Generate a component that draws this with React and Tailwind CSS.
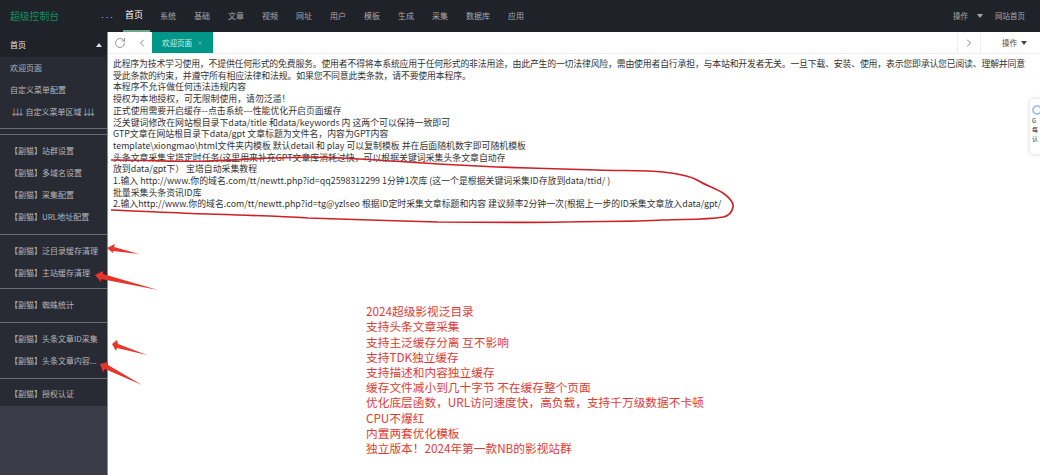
import React from 'react';
import { RotateCw, ChevronLeft, ChevronRight, X } from 'lucide-react';

const navItems = ['系统', '基础', '文章', '视频', '网址', '用户', '模板', '生成', '采集', '数据库', '应用'];

const menuGroups = [
  { cls: 'pt-[5px] pb-[6px]', items: ['【副猫】站群设置', '【副猫】多域名设置', '【副猫】采集配置', '【副猫】URL地址配置'] },
  { cls: 'pt-[5px] pb-[4px]', items: ['【副猫】泛目录缓存清理', '【副猫】主站缓存清理'] },
  { cls: 'pt-[5px] pb-[6px]', items: ['【副猫】蜘蛛统计'] },
  { cls: 'pt-[5px] pb-[6px]', items: ['【副猫】头条文章ID采集', '【副猫】头条文章内容...'] },
  { cls: 'pt-[4px] pb-px', items: ['【副猫】授权认证'] },
];

// first two lines have many full-width commas, the reference sets them tighter
const noticeLines = [
  { text: '此程序为技术学习使用，不提供任何形式的免费服务。使用者不得将本系统应用于任何形式的非法用途，由此产生的一切法律风险，需由使用者自行承担，与本站和开发者无关。一旦下载、安装、使用，表示您即承认您已阅读、理解并同意', cls: 'tracking-[-0.19px]' },
  { text: '受此条款的约束，并遵守所有相应法律和法规。如果您不同意此类条款，请不要使用本程序。', cls: 'tracking-[-0.15px]' },
  { text: '本程序不允许做任何违法违规内容' },
  { text: '授权为本地授权，可无限制使用，请勿泛滥！' },
  { text: '正式使用需要开启缓存--点击系统---性能优化开启页面缓存' },
  { text: '泛关键词修改在网站根目录下data/title 和data/keywords 内 这两个可以保持一致即可' },
  { text: 'GTP文章在网站根目录下data/gpt 文章标题为文件名，内容为GPT内容' },
  { text: 'template\\xiongmao\\html文件夹内模板 默认detail 和 play 可以复制模板 并在后面随机数字即可随机模板' },
  { text: '头条文章采集宝塔定时任务(这里用来补充GPT文章库消耗过快，可以根据关键词采集头条文章自动存' },
  { text: '放到data/gpt下） 宝塔自动采集教程' },
  { text: '1.输入 http://www.你的域名.com/tt/newtt.php?id=qq2598312299 1分钟1次库 (这一个是根据关键词采集ID存放到data/ttid/ )' },
  { text: '批量采集头条资讯ID库' },
  { text: '2.输入http://www.你的域名.com/tt/newtt.php?id=tg@yzlseo 根据ID定时采集文章标题和内容 建议频率2分钟一次(根据上一步的ID采集文章放入data/gpt/' },
];

const promoLines = [
  '2024超级影视泛目录',
  '支持头条文章采集',
  '支持主泛缓存分离 互不影响',
  '支持TDK独立缓存',
  '支持描述和内容独立缓存',
  '缓存文件减小到几十字节 不在缓存整个页面',
  '优化底层函数，URL访问速度快，高负载，支持千万级数据不卡顿',
  'CPU不爆红',
  '内置两套优化模板',
  '独立版本！2024年第一款NB的影视站群',
];

function Caret({ up }) {
  return (
    <svg width="6" height="4" viewBox="0 0 6 4" className="shrink-0">
      <path d={up ? 'M0 4 L3 0 L6 4 Z' : 'M0 0 L3 4 L6 0 Z'} fill="currentColor" />
    </svg>
  );
}

function Header() {
  return (
    <header className="flex h-8 shrink-0 items-center bg-[#20222a] text-[8px]">
      <div className="w-[99px] pl-[10px] text-[9.8px] text-[#0f8f5f]">超级控制台</div>
      <div className="w-[24px] pl-px text-[5px] leading-none tracking-[-0.5px] text-[#c8c9cc]">•••</div>
      <nav className="flex h-full items-center">
        <div className="mr-px flex h-full items-center border-b-2 border-[#6fa98a] pl-[2px] pr-[7px] text-[9px] text-white">首页</div>
        {navItems.map((item) => (
          <div key={item} className="px-[9px] text-[#a6a8ad]">{item}</div>
        ))}
      </nav>
      <div className="ml-auto flex items-center pr-[15px] text-[7.5px] text-[#a6a8ad]">
        <span>操作</span>
        <span className="ml-[9px]"><Caret /></span>
        <span className="ml-[12px]">网站首页</span>
      </div>
    </header>
  );
}

function Sidebar() {
  return (
    <aside className="flex w-[108px] shrink-0 flex-col border-r border-[#8a8c92] bg-[#282b33] text-[8px] text-[#b4b6ba]">
      <div className="flex h-[25px] items-center justify-between bg-[#20222a] pl-[10px] pr-[5px] text-[#e2e2e2]">
        <span>首页</span>
        <Caret up />
      </div>
      <div className="flex flex-col pb-[5px]">
        <div className="flex h-[22px] items-center whitespace-nowrap pl-[10px]">欢迎页面</div>
        <div className="flex h-[22px] items-center whitespace-nowrap pl-[10px]">自定义菜单配置</div>
        <div className="flex h-[22px] items-center whitespace-nowrap pl-[10px]">
          <span className="tracking-[-4.5px]">↓↓↓</span>
          <span className="ml-[5px]">自定义菜单区域</span>
          <span className="tracking-[-4.5px]">↓↓↓</span>
        </div>
      </div>
      <div className="h-[6px] border-t border-[#6b6d73]" />
      {menuGroups.map((group) => (
        <div key={group.items[0]} className={'flex flex-col border-t border-[#6b6d73] ' + group.cls}>
          {group.items.map((item) => (
            <div key={item} className="flex h-[22px] items-center whitespace-nowrap pl-[10px]">{item}</div>
          ))}
        </div>
      ))}
      <div className="flex-1 bg-[#3a3d47]" />
    </aside>
  );
}

function TabBar() {
  return (
    <div className="flex h-[22px] shrink-0 items-stretch border-b border-[#eeeeee] bg-white text-[#444]">
      <div className="flex w-[24px] items-center justify-center text-[#777]">
        <RotateCw size={12} strokeWidth={1.5} />
      </div>
      <div className="flex w-[20px] items-center justify-center text-[#666]">
        <ChevronLeft size={12} strokeWidth={1.5} />
      </div>
      <div className="flex w-[61px] items-center justify-center gap-[5px] bg-[#009688] text-[7.5px] text-[#d6f0ec]">
        <span>欢迎页面</span>
        <X size={6} strokeWidth={1.5} />
      </div>
      <div className="ml-auto flex w-[23px] items-center justify-center border-l border-[#eeeeee] text-[#555]">
        <ChevronRight size={12} strokeWidth={1.5} />
      </div>
      <div className="flex w-[60px] items-center justify-start gap-[4px] border-l border-[#eeeeee] pl-[21px] text-[7.5px]">
        <span>操作</span>
        <Caret />
      </div>
    </div>
  );
}

function Annotations() {
  return (
    <svg className="pointer-events-none absolute left-0 top-0" width="1040" height="475" viewBox="0 0 1040 475">
      <path
        d="M111 160 C150 160 180 162 208 161 C240 160 260 158 275 158 C300 157 320 157 341 158 C380 160 405 162 438 164 C460 165 480 166 497 167 C530 168 565 169 597 170 C620 171 645 170 663 172 C680 174 690 176 697 180 C705 185 715 188 723 193 C730 198 734 202 733 207 C732 213 728 216 723 217 C705 220 685 219 663 220 C630 222 595 221 563 222 C520 223 475 222 438 222 C395 221 350 219 308 218 C275 216 240 215 208 214 C175 213 140 211 111 210"
        fill="none"
        stroke="#cf2027"
        strokeWidth="1.6"
      />
      <path d="M107 248 L115 244 L114 247 L139 254 L113 251 L113 253 Z" fill="#e8352b" />
      <path d="M95 275 L103 271 L103 274 L158 290 L101 279 L101 282 Z" fill="#e8352b" />
      <path d="M112 344 L117 340 L118 344 L147 355 L117 348 L116 351 Z" fill="#e8352b" />
      <path d="M100 364 L108 362 L108 365 L142 385 L105 369 L103 372 Z" fill="#e8352b" />
    </svg>
  );
}

export default function App() {
  return (
    <div className="relative flex h-[475px] w-[1040px] flex-col overflow-hidden bg-white font-['Noto_Sans_CJK_SC','Noto_Sans',sans-serif]">
      <Header />
      <div className="flex min-h-0 flex-1">
        <Sidebar />
        <main className="flex min-w-0 flex-1 flex-col">
          <TabBar />
          <div className="relative flex-1 pl-[5px] pt-[4px]">
            <div className="whitespace-nowrap text-[8.9px] leading-[11.7px] text-[#333]">
              {noticeLines.map((line) => (
                <div key={line.text} className={line.cls}>{line.text}</div>
              ))}
            </div>
            <div className="ml-[253px] mt-[93px] whitespace-nowrap text-[11.7px] leading-[15.2px] text-[#e03a35]">
              {promoLines.map((line) => (
                <div key={line}>{line}</div>
              ))}
            </div>
            <div className="absolute right-0 top-[45px] flex h-[55px] w-[10px] flex-col items-start rounded-l-[3px] bg-white pl-[2px] pt-[6px] text-[6px] leading-[9px] text-[#333] shadow-[0_0_4px_rgba(0,0,0,0.2)]">
              <div className="mb-[1px] h-[10px] w-[10px] rounded-full border-2 border-[#a9c4e8]" />
              <span>G</span>
              <span>每</span>
              <span>认</span>
            </div>
          </div>
        </main>
      </div>
      <Annotations />
    </div>
  );
}
